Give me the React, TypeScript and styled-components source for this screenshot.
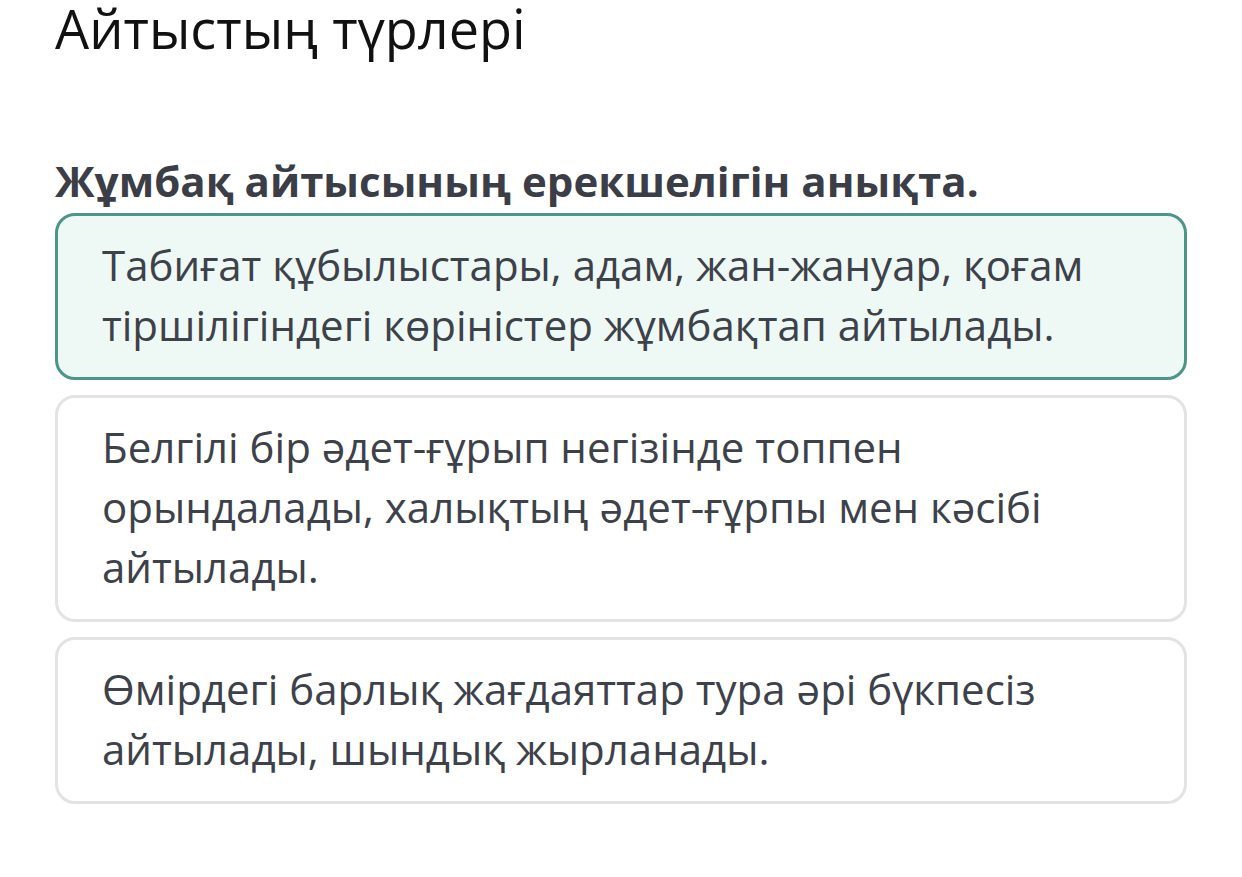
import React from "react";
import styled, { createGlobalStyle } from "styled-components";

const Global = createGlobalStyle`
  html, body { margin: 0; padding: 0; background: #ffffff; }
  body { font-family: "Open Sans", "Noto Sans", sans-serif; }
`;

const Page = styled.div`
  padding: 0 55px;
  display: flex;
  flex-direction: column;
`;

const Title = styled.h1`
  margin: 0;
  font-weight: 400;
  font-size: 54px;
  line-height: 56px;
  color: #111111;
`;

const Question = styled.h2`
  margin: 100px 0 0 0;
  font-weight: 700;
  font-size: 42px;
  line-height: 50px;
  color: #3b3e46;
`;

const Options = styled.div`
  margin-top: 7px;
  display: flex;
  flex-direction: column;
  gap: 15px;
`;

const Option = styled.div<{ $selected?: boolean }>`
  border: 3px solid ${(p) => (p.$selected ? "#4b9589" : "#e3e3e3")};
  background: ${(p) => (p.$selected ? "#eef8f4" : "#ffffff")};
  border-radius: 20px;
  padding: 19px 44px 22px 44px;
  font-size: 42px;
  line-height: 60px;
  color: #3d4149;
`;

const options = [
  "Табиғат құбылыстары, адам, жан-жануар, қоғам тіршілігіндегі көріністер жұмбақтап айтылады.",
  "Белгілі бір әдет-ғұрып негізінде топпен орындалады, халықтың әдет-ғұрпы мен кәсібі айтылады.",
  "Өмірдегі барлық жағдаяттар тура әрі бүкпесіз айтылады, шындық жырланады.",
];

export default function App() {
  return (
    <>
      <Global />
      <Page>
        <Title>Айтыстың түрлері</Title>
        <Question>Жұмбақ айтысының ерекшелігін анықта.</Question>
        <Options>
          {options.map((o, i) => (
            <Option key={i} $selected={i === 0}>
              {o}
            </Option>
          ))}
        </Options>
      </Page>
    </>
  );
}
